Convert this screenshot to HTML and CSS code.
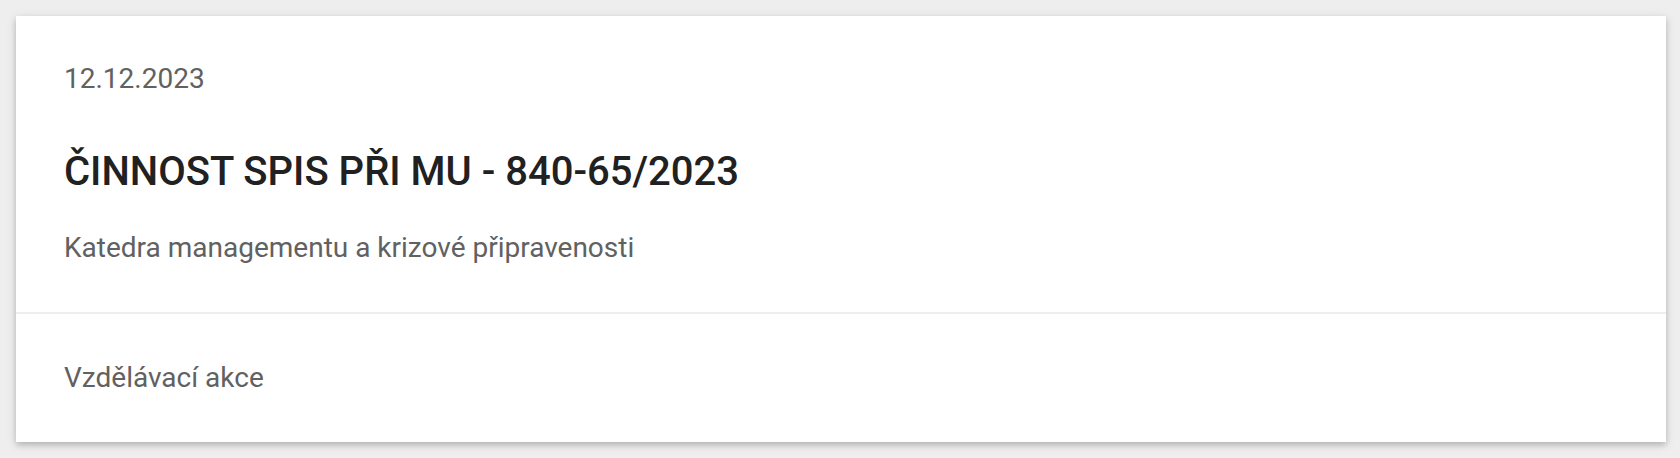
FILE: index.html
```html
<!DOCTYPE html>
<html lang="cs">
  <head>
    <title>Činnost SPIS při MU</title>
    <link rel="stylesheet" href="styles.css">
  </head>
  <body>
    <div class="card">
      <div class="card-main">
        <div class="card-date">12.12.2023</div>
        <h2 class="card-title">ČINNOST SPIS PŘI MU - 840-65/2023</h2>
        <div class="card-subtitle">Katedra managementu a krizové připravenosti</div>
      </div>
      <div class="card-footer">
        <div class="card-type">Vzdělávací akce</div>
      </div>
    </div>
  </body>
</html>
```

FILE: styles.css
```css
body {
  margin: 0;
  padding: 16px 14px 16px 16px;
  background-color: #eeeeee;
  font-family: Roboto, "Noto Sans", sans-serif;
}

.card {
  background-color: #ffffff;
  box-shadow: 0 3px 6px rgba(0, 0, 0, 0.2), 0 2px 12px rgba(0, 0, 0, 0.08);
}

.card-main {
  padding: 42px 48px 43px;
  border-bottom: 2px solid #eeeeee;
}

.card-date {
  font-size: 28px;
  line-height: 42px;
  color: #616161;
}

.card-title {
  margin: 47px 0 30px;
  font-size: 40px;
  line-height: 50px;
  font-weight: 500;
  color: #212121;
}

.card-subtitle {
  font-size: 28px;
  line-height: 42px;
  color: #616161;
}

.card-footer {
  padding: 43px 48px 43px;
}

.card-type {
  font-size: 28px;
  line-height: 42px;
  color: #616161;
}
```
